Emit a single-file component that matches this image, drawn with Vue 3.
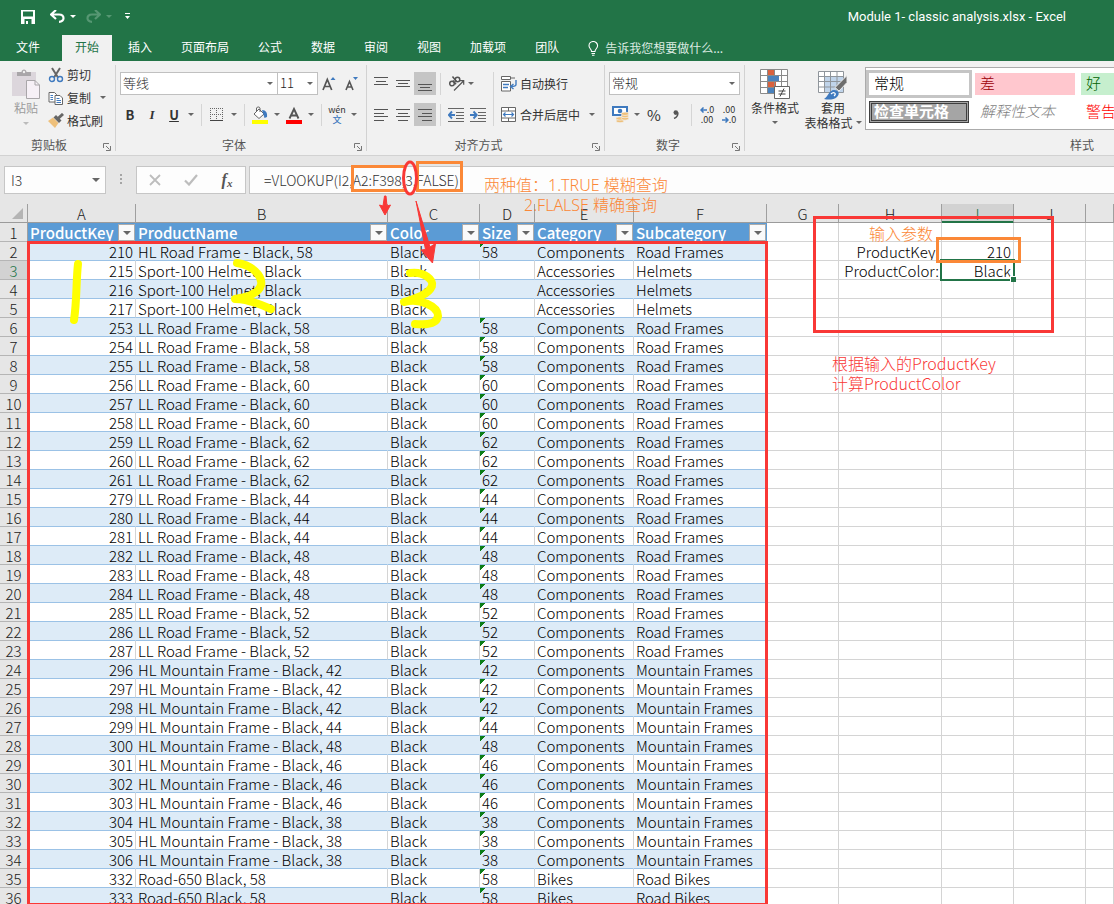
<script setup>
import { ref } from 'vue'

const tabs = ['插入', '页面布局', '公式', '数据', '审阅', '视图', '加载项', '团队']
const formula = ref('=VLOOKUP(I2,A2:F398,3,FALSE)')
const cellName = ref('I3')

const columns = [
  { id: 'A', title: 'ProductKey' },
  { id: 'B', title: 'ProductName' },
  { id: 'C', title: 'Color' },
  { id: 'D', title: 'Size' },
  { id: 'E', title: 'Category' },
  { id: 'F', title: 'Subcategory' },
]
const freeColumns = ['G', 'H', 'I', 'J', '']

const components = (key, name, size, sub) => [key, name + ' - Black, ' + size, 'Black', size, 'Components', sub]
const helmet = (key) => [key, 'Sport-100 Helmet, Black', 'Black', '', 'Accessories', 'Helmets']
const bike = (key) => [key, 'Road-650 Black, 58', 'Black', '58', 'Bikes', 'Road Bikes']
const group = (keys, name, size, sub) => keys.map((k) => components(k, name, size, sub))

const data = [
  components(210, 'HL Road Frame', '58', 'Road Frames'),
  helmet(215),
  helmet(216),
  helmet(217),
  ...group([253, 254, 255], 'LL Road Frame', '58', 'Road Frames'),
  ...group([256, 257, 258], 'LL Road Frame', '60', 'Road Frames'),
  ...group([259, 260, 261], 'LL Road Frame', '62', 'Road Frames'),
  ...group([279, 280, 281], 'LL Road Frame', '44', 'Road Frames'),
  ...group([282, 283, 284], 'LL Road Frame', '48', 'Road Frames'),
  ...group([285, 286, 287], 'LL Road Frame', '52', 'Road Frames'),
  ...group([296, 297, 298], 'HL Mountain Frame', '42', 'Mountain Frames'),
  ...group([299], 'HL Mountain Frame', '44', 'Mountain Frames'),
  ...group([300], 'HL Mountain Frame', '48', 'Mountain Frames'),
  ...group([301, 302, 303], 'HL Mountain Frame', '46', 'Mountain Frames'),
  ...group([304, 305, 306], 'HL Mountain Frame', '38', 'Mountain Frames'),
  bike(332),
  bike(333),
]
const rows = data.map((cells, i) => ({ n: i + 2, cells }))

const side = { '2H': 'ProductKey:', '2I': '210', '3H': 'ProductColor:', '3I': 'Black' }
const sideText = (n, c) => side[n + c] || ''
</script>

<template>
  <div class="app">
    <header class="titlebar">
      <div class="quick">
        <button aria-label="保存" class="q-save">
          <svg width="14" height="14" viewBox="0 0 14 14"><path d="M0 0h14v14H0z M2 1.5v5h10v-5z M3.5 9v5h7V9z" fill="#fff" fill-rule="evenodd" /><path d="M5 11h2v3H5z" fill="#fff" /></svg>
        </button>
        <button aria-label="撤消" class="q-undo">
          <svg width="15" height="13" viewBox="0 0 15 13"><path d="M6 0L1 4.5 6 9M1.5 4.5H9c6 0 6 7.3 0 7.3" fill="none" stroke="#fff" stroke-width="2.2" /></svg>
        </button>
        <i class="caret light"></i>
        <button aria-label="恢复" class="q-redo">
          <svg width="15" height="13" viewBox="0 0 15 13"><path d="M9 0l5 4.500-5 4.500M13.500 4.500H6c-6 0-6 7.300 0 7.300" fill="none" stroke="#569773" stroke-width="2.200" /></svg>
        </button>
        <i class="caret faded"></i>
        <button aria-label="自定义快速访问工具栏" class="q-more">
          <svg width="6" height="7" viewBox="0 0 6 7"><path d="M0 0h5v1H0zM0 3h5L2.500 6z" fill="#fff" /></svg>
        </button>
      </div>
      <h1>Module 1- classic analysis.xlsx - Excel</h1>
    </header>

    <nav class="tabs">
      <button class="file">文件</button>
      <button class="active">开始</button>
      <button v-for="t in tabs" :key="t">{{ t }}</button>
      <button class="tell">
        <svg width="11" height="15" viewBox="0 0 11 15"><path d="M3.500 10.500C3.500 8 1 7.500 1 4.800a4.300 4.300 0 0 1 8.600 0C9.600 7.500 7 8 7 10.500zM3.500 12.500H7M4 14.300h2.500" fill="none" stroke="#fff" stroke-width="1.100" /></svg>
        <span>告诉我您想要做什么...</span>
      </button>
    </nav>

    <section class="ribbon">
      <div class="group clipboard">
        <div class="body">
          <button class="paste">
            <svg width="28" height="30" viewBox="0 0 28 30"><path d="M0 3h24v24H0z" fill="#dcd6dc" /><path d="M5 7V3h4.500C9.500-.500 14.500-.500 14.500 3H19v4z" fill="#a9a6a9" /><circle cx="12" cy="3" r="1.200" fill="#f1f1f1" /><path d="M14.500 11.500h8.500l4.500 4.500v13.500h-13z" fill="#f6f0f6" stroke="#a9a6a9" /><path d="M23 11.500v4.500h4.500" fill="none" stroke="#a9a6a9" /></svg>
            <span>粘贴</span>
            <i class="caret pale"></i>
          </button>
          <div class="clip-list">
            <button>
              <svg width="16" height="16" viewBox="0 0 16 16"><path d="M4 1l6 9.500M12 1L6 10.500" stroke="#666" stroke-width="2" fill="none" /><circle cx="4" cy="12" r="2.500" fill="none" stroke="#3f7abf" stroke-width="1.400" /><circle cx="12" cy="12" r="2.500" fill="none" stroke="#3f7abf" stroke-width="1.400" /></svg>
              剪切
            </button>
            <button>
              <svg width="16" height="16" viewBox="0 0 16 16"><path d="M1 2.500h5.500l2 2V12H1z" fill="#fff" stroke="#666" /><path d="M7 5.500h5L14.500 8v6.500H7z" fill="#fff" stroke="#666" /><path d="M2.500 5.500H5M2.500 7.500H5M2.500 9.500H5M8.500 8.500h3M8.500 10.500h4.500M8.500 12.500h4.500" stroke="#3f7abf" /></svg>
              复制
              <i class="caret"></i>
            </button>
            <button>
              <svg width="16" height="16" viewBox="0 0 16 16"><path d="M0 8l5-3.500 5.500 5.500L7 15z" fill="#eec07b" /><path d="M5.500 4.500L8 2l5.500 5.500L11 10z" fill="#666" /><path d="M10 5.500L15 1" stroke="#666" stroke-width="3" /></svg>
              格式刷
            </button>
          </div>
        </div>
        <footer>剪贴板<button class="launch" aria-label="剪贴板选项"><svg width="8" height="8" viewBox="0 0 8 8"><path d="M.500 5V.500H6M3 3l3.500 3.500M7.500 3v4.500H3" fill="none" stroke="#777" /></svg></button></footer>
      </div>

      <div class="group font">
        <div class="body stack">
          <div class="row">
            <label class="combo w-font"><select aria-label="字体"><option>等线</option></select><i class="caret"></i></label>
            <label class="combo w-size"><select aria-label="字号"><option>11</option></select><i class="caret"></i></label>
            <button class="btn" aria-label="增大字号"><svg width="16" height="16" viewBox="0 0 16 16"><path d="M2 14L6.300 3.500 10.700 14M3.500 10.500h5.500" fill="none" stroke="#555" stroke-width="1.700" /><path d="M9.500 4L12 1l2.500 3z" fill="#3f7abf" /></svg></button>
            <button class="btn" aria-label="减小字号"><svg width="16" height="16" viewBox="0 0 16 16"><path d="M3 14l3.500-8.500L10 14M4.200 11h4.600" fill="none" stroke="#555" stroke-width="1.600" /><path d="M10 1h5l-2.500 3z" fill="#3f7abf" /></svg></button>
          </div>
          <div class="row">
            <button class="btn bold">B</button>
            <button class="btn italic">I</button>
            <button class="btn under">U</button>
            <button class="drop" aria-label="下划线选项"><i class="caret"></i></button>
            <i class="sep"></i>
            <button class="btn" aria-label="边框"><svg width="14" height="14" viewBox="0 0 14 14"><path d="M.500 0v12M12.500 0v12M6.500 0v12M0 .500h13M0 6.500h13" stroke="#666" stroke-dasharray="1 1" /><path d="M0 12.500h13" stroke="#444" /></svg></button>
            <button class="drop" aria-label="边框选项"><i class="caret"></i></button>
            <i class="sep"></i>
            <button class="btn" aria-label="填充颜色"><svg width="18" height="18" viewBox="0 0 18 18"><path d="M8 3l5 5-5 4.500L3 8z" fill="#fff" stroke="#666" /><path d="M5.500 6V2a2 2 0 0 1 3.500 0v4" fill="none" stroke="#666" /><path d="M11 4c4 0 5.500 3 5 7l-2.500 1z" fill="#3f7abf" /><path d="M1 14h16v4H1z" fill="#ff0" /></svg></button>
            <button class="drop" aria-label="填充颜色选项"><i class="caret"></i></button>
            <button class="btn" aria-label="字体颜色"><svg width="18" height="18" viewBox="0 0 18 18"><path d="M4.500 12.500L9 3l4.500 9.500M6 9.500h6" fill="none" stroke="#555" stroke-width="1.900" /><path d="M1 14h16v4H1z" fill="red" /></svg></button>
            <button class="drop" aria-label="字体颜色选项"><i class="caret"></i></button>
            <i class="sep"></i>
            <button class="btn wen"><span>wén</span><b>文</b></button>
            <button class="drop" aria-label="拼音选项"><i class="caret"></i></button>
          </div>
        </div>
        <footer>字体<button class="launch" aria-label="字体选项"><svg width="8" height="8" viewBox="0 0 8 8"><path d="M.500 5V.500H6M3 3l3.500 3.500M7.500 3v4.500H3" fill="none" stroke="#777" /></svg></button></footer>
      </div>

      <div class="group align">
        <div class="body split">
          <div class="stack">
            <div class="row">
              <button class="btn" aria-label="顶端对齐"><svg width="14" height="14" viewBox="0 0 14 14"><path d="M0 .500h14M2 4.500h10M0 7.500h14" stroke="#555" /></svg></button>
              <button class="btn" aria-label="垂直居中"><svg width="14" height="14" viewBox="0 0 14 14"><path d="M0 3.500h14M2 6.500h10M0 9.500h14" stroke="#555" /></svg></button>
              <button class="btn on" aria-label="底端对齐"><svg width="14" height="14" viewBox="0 0 14 14"><path d="M0 7.500h14M2 10.500h10M0 13.500h14" stroke="#555" /></svg></button>
              <i class="sep"></i>
              <button class="btn" aria-label="方向"><svg width="17" height="17" viewBox="0 0 17 17"><g fill="none" stroke="#555" stroke-width="1.500"><circle cx="4" cy="8.500" r="2.300" /><path d="M5 5.500l3 3.800" /><circle cx="9.500" cy="4.500" r="2.300" /><path d="M4.500 1.500l4 5" /><path d="M6 15.500L15.500 6M11.500 5.700h4.200v4" stroke-width="1.200" /></g></svg></button>
              <button class="drop slim" aria-label="方向选项"><i class="caret"></i></button>
            </div>
            <div class="row">
              <button class="btn" aria-label="左对齐"><svg width="14" height="14" viewBox="0 0 14 14"><path d="M0 1.500h14M0 5.500h10M0 8.500h14M0 12.500h10" stroke="#555" /></svg></button>
              <button class="btn" aria-label="居中"><svg width="14" height="14" viewBox="0 0 14 14"><path d="M0 1.500h14M2 5.500h10M0 8.500h14M2 12.500h10" stroke="#555" /></svg></button>
              <button class="btn on" aria-label="右对齐"><svg width="14" height="14" viewBox="0 0 14 14"><path d="M0 1.500h14M4 5.500h10M0 8.500h14M4 12.500h10" stroke="#555" /></svg></button>
              <i class="sep"></i>
              <button class="btn" aria-label="减少缩进量"><svg width="16" height="14" viewBox="0 0 16 14"><path d="M0 .500h16M8 4.500h8M8 7.500h8M8 10.500h8M0 13.500h16" stroke="#666" /><path d="M7 7H1M4 3.500L.800 7 4 10.500" fill="none" stroke="#3f7abf" stroke-width="1.900" /></svg></button>
              <button class="btn" aria-label="增加缩进量"><svg width="16" height="14" viewBox="0 0 16 14"><path d="M0 .500h16M8 4.500h8M8 7.500h8M8 10.500h8M0 13.500h16" stroke="#666" /><path d="M0 7h6M3.500 3.500L6.700 7l-3.200 3.500" fill="none" stroke="#3f7abf" stroke-width="1.900" /></svg></button>
            </div>
          </div>
          <i class="sep tall"></i>
          <div class="stack">
            <div class="row">
              <button class="text-btn"><svg width="16" height="16" viewBox="0 0 16 16"><path d="M.500.500h9v3h-9zM.500 5.500h9v9.500h-9z" fill="#fff" stroke="#666" /><path d="M9.500 2H14" stroke="#666" /><path d="M2 8.500h6M2 11.500h5M15 4v4.500c0 2-2 2-5 2M12.500 8l-3 2.500 3 2.500" fill="none" stroke="#3f7abf" stroke-width="1.400" /></svg>自动换行</button>
            </div>
            <div class="row">
              <button class="text-btn"><svg width="16" height="16" viewBox="0 0 16 16"><path d="M.500.500h14v14H.500zM.500 4h14M.500 11h14M7.500.500V4M7.500 11v3.500" fill="#fff" stroke="#666" /><path d="M2.500 7.500h10M4.500 5.500l-2 2 2 2M10.500 5.500l2 2-2 2" fill="none" stroke="#3f7abf" stroke-width="1.200" /></svg>合并后居中</button>
              <button class="drop" aria-label="合并选项"><i class="caret"></i></button>
            </div>
          </div>
        </div>
        <footer>对齐方式<button class="launch" aria-label="对齐选项"><svg width="8" height="8" viewBox="0 0 8 8"><path d="M.500 5V.500H6M3 3l3.500 3.500M7.500 3v4.500H3" fill="none" stroke="#777" /></svg></button></footer>
      </div>

      <div class="group number">
        <div class="body stack">
          <div class="row">
            <label class="combo w-number"><select aria-label="数字格式"><option>常规</option></select><i class="caret"></i></label>
          </div>
          <div class="row">
            <button class="btn" aria-label="会计数字格式"><svg width="17" height="17" viewBox="0 0 17 17"><path d="M1 1h14v8H1z" fill="#fff" stroke="#3f7abf" stroke-width="2" /><circle cx="8" cy="5" r="2.300" fill="#3f7abf" /><g fill="#eec07b" stroke="#f1f1f1" stroke-width=".700"><ellipse cx="8" cy="15" rx="4" ry="1.700" /><ellipse cx="8" cy="12.500" rx="4" ry="1.700" /><ellipse cx="13" cy="12.500" rx="3.700" ry="1.700" /><ellipse cx="13" cy="10" rx="3.700" ry="1.700" /><ellipse cx="13" cy="7.800" rx="3.700" ry="1.700" /></g></svg></button>
            <button class="drop" aria-label="货币选项"><i class="caret"></i></button>
            <button class="btn sign">%</button>
            <button class="btn sign comma" aria-label="千位分隔"><svg width="6" height="9" viewBox="0 0 6 9"><circle cx="2.800" cy="2.600" r="2.300" fill="#555" /><path d="M5 2.500C5 5.500 3.500 7.500 1 8.500" fill="none" stroke="#555" stroke-width="1.400" /></svg></button>
            <i class="sep"></i>
            <button class="btn dec"><span><svg width="7" height="6" viewBox="0 0 7 6"><path d="M7 3H1M3.500.500L1 3l2.500 2.500" fill="none" stroke="#3f7abf" stroke-width="1.500" /></svg>.0</span><span class="low">.00</span></button>
            <button class="btn dec"><span>.00</span><span><svg width="7" height="6" viewBox="0 0 7 6"><path d="M0 3h6M3.500.500L6 3 3.500 5.500" fill="none" stroke="#3f7abf" stroke-width="1.500" /></svg>.0</span></button>
          </div>
        </div>
        <footer>数字<button class="launch" aria-label="数字选项"><svg width="8" height="8" viewBox="0 0 8 8"><path d="M.500 5V.500H6M3 3l3.500 3.500M7.500 3v4.500H3" fill="none" stroke="#777" /></svg></button></footer>
      </div>

      <div class="group styles">
        <div class="body">
          <button class="big">
            <svg width="30" height="31" viewBox="0 0 30 31"><path d="M.500.500h27v24H.500z" fill="#fff" /><path d="M8 1h7v5H8zM8 13h8v6H8z" fill="#d9623f" /><path d="M8 19h6v6H8z" fill="#4a82bd" /><path d="M.500.500h27v24H.500zM.500 6.500h27M.500 12.500h27M.500 18.500h27M7.500.500v24M14.500.500v24M21.500.500v24" fill="none" stroke="#8a8a8a" /><path d="M8 7h11v5H8z" fill="#4a82bd" /><path d="M14.500 17.500h15v12h-15z" fill="#fff" stroke="#666" /><path d="M18.500 22h7M18.500 25h7M24 19.500l-4 8" stroke="#444" /></svg>
            <span>条件格式</span>
            <span class="line"><i class="caret"></i></span>
          </button>
          <button class="big second">
            <svg width="30" height="31" viewBox="0 0 30 31"><path d="M.500 2.500h25v21H.500z" fill="#fff" /><path d="M7 8h18v15H7z" fill="#c0d4ea" /><path d="M.500 2.500h25v21H.500zM.500 7.500h25M.500 12.500h25M.500 18h25M6.500 2.500v21M12.500 2.500v21M19 2.500v21" fill="none" stroke="#8f959b" /><path d="M29 6.500v7L21 22l-4-3.500z" fill="#6d6d6d" stroke="#f1f1f1" /><path d="M6 30c4-2 5-9 10-9s6 4 3 7-9 3-13 2z" fill="#3f7abf" /><path d="M13 25c3-3 6 0 3 2" fill="none" stroke="#fff" stroke-width="1.300" /></svg>
            <span>套用</span>
            <span class="line">表格格式<i class="caret"></i></span>
          </button>
          <div class="gallery">
            <button class="s-normal">常规</button>
            <button class="s-bad">差</button>
            <button class="s-good">好</button>
            <button class="s-check">检查单元格</button>
            <button class="s-note">解释性文本</button>
            <button class="s-warn">警告</button>
          </div>
        </div>
        <footer>样式</footer>
      </div>
    </section>

    <section class="formula-bar">
      <label class="name-box"><input v-model="cellName" aria-label="名称框" /><i class="caret"></i></label>
      <svg class="dots" width="3" height="12" viewBox="0 0 3 12"><path d="M0 0h2v2H0zM0 4h2v2H0zM0 8h2v2H0z" fill="#a5a5a5" /></svg>
      <div class="fx">
        <button aria-label="取消"><svg width="12" height="12" viewBox="0 0 12 12"><path d="M1 1l10 10M11 1L1 11" stroke="#bdbdbd" stroke-width="1.800" /></svg></button>
        <button aria-label="输入"><svg width="14" height="12" viewBox="0 0 14 12"><path d="M1 6.500L5 10.500 13 1" fill="none" stroke="#bdbdbd" stroke-width="2.200" /></svg></button>
        <button class="fn" aria-label="插入函数"><i>f</i><sub>x</sub></button>
      </div>
      <input v-model="formula" class="formula" aria-label="编辑栏" />
    </section>

    <main class="sheet">
      <table>
        <colgroup>
          <col class="c-n" /><col class="c-a" /><col class="c-b" /><col class="c-c" /><col class="c-d" /><col class="c-e" /><col class="c-f" /><col class="c-g" /><col class="c-h" /><col class="c-i" /><col class="c-i" /><col />
        </colgroup>
        <thead>
          <tr>
            <th class="corner"><svg width="12" height="11" viewBox="0 0 12 11"><path d="M11 0v11H0z" fill="#b4b4b4" /></svg></th>
            <th v-for="c in columns" :key="c.id">{{ c.id }}</th>
            <th v-for="c in freeColumns" :key="c" :class="{ current: c === 'I' }">{{ c }}</th>
          </tr>
        </thead>
        <tbody>
          <tr>
            <th>1</th>
            <td v-for="c in columns" :key="c.id" class="head">
              <div>{{ c.title }}<button :aria-label="c.title + ' 筛选'"><i class="caret"></i></button></div>
            </td>
            <td v-for="c in freeColumns" :key="c" class="free"></td>
          </tr>
          <tr v-for="r in rows" :key="r.n" :class="{ band: r.n % 2 === 0 }">
            <th :class="{ current: r.n === 3 }">{{ r.n }}</th>
            <td v-for="(t, i) in r.cells" :key="i" class="rec" :class="{ num: i === 0, flag: i === 3 && t }">{{ t }}</td>
            <td v-for="c in freeColumns" :key="c" class="free" :class="{ selected: r.n === 3 && c === 'I' }">{{ sideText(r.n, c) }}</td>
          </tr>
        </tbody>
      </table>
      <div class="range"></div>
    </main>

    <div class="notes">
      <div class="box orange b-range"></div>
      <div class="box orange b-false"></div>
      <div class="box red b-params"></div>
      <div class="box orange b-key"></div>
      <svg width="500" height="340" viewBox="0 0 500 340">
        <ellipse cx="410" cy="178" rx="6.500" ry="16" fill="none" stroke="#f93836" stroke-width="3" />
        <path d="M384.500 196h1.500l1 10 3.500-1-5.500 10-5.500-10 3.500 1zM416 201l14 46 5.500-3.500L432.500 263 421 250l4.500-.500z" fill="#f93836" stroke="#f93836" stroke-linejoin="round" />
        <g fill="none" stroke="#ff0" stroke-width="8" stroke-linecap="round" stroke-linejoin="round">
          <path d="M78 264C76 282 77 300 74 320" />
          <path d="M237 263C252 265 263 276 261 285C259 293 249 297 235 299C247 299 260 304 271 309" />
          <path d="M410 273C424 271 434 280 432 286C429 294 417 298 404 302C420 298 438 306 438 316C437 324 426 325 415 324" />
        </g>
      </svg>
      <p class="orange-text n1">两种值：1.TRUE 模糊查询</p>
      <p class="orange-text n2">2.FLALSE 精确查询</p>
      <p class="orange-text n3">输入参数</p>
      <p class="red-text n4">根据输入的ProductKey<br />计算ProductColor</p>
    </div>
  </div>
</template>

<style>
body { margin: 0; }
</style>

<style scoped>
.app { position: relative; height: 100vh; display: flex; flex-direction: column; overflow: hidden; background: #e6e6e6; color: #333; font: 12px/16px "Noto Sans CJK SC", sans-serif; }
.app * { box-sizing: border-box; }
button { border: 0; padding: 0; margin: 0; background: none; color: inherit; font: inherit; display: flex; align-items: center; justify-content: center; white-space: nowrap; }
input, select { font: inherit; color: inherit; border: 0; background: none; outline: 0; min-width: 0; }
svg { display: block; flex: none; }
.caret { display: block; flex: none; width: 0; height: 0; border: 3px solid transparent; border-top-color: #666; border-bottom: 0; }
.caret.light { border-top-color: #fff; }
.caret.faded { border-top-color: #569773; }
.caret.pale { border-top-color: #bbb; }

.titlebar { flex: none; height: 35px; padding: 0 48px 2px 21px; background: #227447; color: #fff; display: flex; align-items: center; justify-content: space-between; }
.titlebar h1 { margin: 0; font: 13px/16px Roboto, sans-serif; }
.quick { display: flex; align-items: center; height: 30px; }
.q-undo { margin: 0 5px 0 15px; }
.q-redo { margin: 0 5px 0 10px; }
.q-more { margin: 0 0 0 13px; }

.tabs { flex: none; height: 26px; background: #227447; color: #fff; display: flex; }
.tabs button { padding: 0 13px 2px; margin-right: 3px; }
.tabs .file { width: 62px; padding: 0 6px 2px 0; margin: 0; }
.tabs .active { background: #f1f1f1; color: #227447; }
.tabs .tell { gap: 6px; padding-bottom: 0; color: #dcebe2; }

.ribbon { flex: none; height: 95px; background: #f1f1f1; border-bottom: 1px solid #d2d2d2; display: flex; overflow: hidden; }
.group { flex: none; display: flex; flex-direction: column; position: relative; }
.group::after { content: ""; position: absolute; right: 0; top: 4px; bottom: 4px; width: 1px; background: #d2d2d2; }
.group footer { height: 16px; display: flex; align-items: center; justify-content: center; color: #555; position: relative; padding-right: 18px; }
.launch { position: absolute; right: 5px; bottom: 2px; }
.body { height: 76px; display: flex; }
.stack { display: flex; flex-direction: column; gap: 8px; }
.body.stack, .split { padding-top: 11px; }
.row { display: flex; align-items: center; height: 23px; }
.btn { width: 22px; height: 23px; flex: none; }
.btn.on { background: #c5c5c5; }
.drop { width: 12px; height: 23px; flex: none; }
.drop.slim { width: 8px; }
.sep { flex: none; width: 1px; height: 22px; margin: 0 4px; background: #d5d5d5; }
.sep.tall { height: 54px; }

.clipboard { width: 116px; }
.paste { width: 28px; margin: 8px 0 0 12px; flex-direction: column; justify-content: flex-start; color: #9c9c9c; }
.paste .caret { margin-top: 6px; }
.paste span { margin-top: 1px; }
.clip-list { padding: 2px 0 0 8px; }
.clip-list button { height: 23px; gap: 3px; }
.clip-list .caret { margin-left: 6px; }

.font { width: 251px; padding-left: 3px; }
.font .row:first-child { padding-left: 1px; }
.combo { position: relative; display: flex; height: 23px; background: #fff; border: 1px solid #c0c0c0; }
.combo select { appearance: none; width: 100%; padding: 0 2px 2px; font-size: 13px; font-weight: 300; color: #222; }
.combo .caret { position: absolute; right: 4px; top: 9px; }
.w-font { width: 158px; }
.w-size { width: 41px; margin-left: -1px; }
.w-number { width: 131px; }
.bold { font-weight: 700; font-size: 13px; }
.italic { font: italic 700 13px "Liberation Serif", serif; }
.under { font-weight: 700; font-size: 13px; text-decoration: underline; }
.wen { flex-direction: column; font-size: 9px; line-height: 10px; }
.wen b { color: #3f7abf; font-weight: 500; }

.align { width: 238px; padding-left: 3px; }
.text-btn { height: 23px; gap: 3px; padding-left: 3px; }
.text-btn + .drop { margin-left: 6px; }
.number { width: 140px; padding-left: 4px; }
.sign { font-size: 15px; }
.dec { flex-direction: column; font-size: 9px; line-height: 10px; align-items: center; }
.dec span { display: flex; align-items: center; }

.styles { flex: 1; min-width: 0; overflow: hidden; }
.styles footer { padding: 0 20px 0 0; justify-content: flex-end; }
.styles::after { display: none; }
.big { flex: none; width: 60px; padding-top: 8px; flex-direction: column; justify-content: flex-start; }
.big span { line-height: 15px; }
.big .line { display: flex; align-items: center; justify-content: center; height: 15px; }
.big.second { width: 56px; }
.big.second .line { gap: 3px; }
.gallery { flex: 1; min-width: 0; overflow: hidden; height: 63px; margin: 6px 0 0 4px; padding: 5px 0 5px 3px; background: #fff; border: 1px solid #ababab; border-right: 0; display: grid; grid-template-columns: 100px 100px minmax(0, 1fr); grid-auto-rows: 22px; gap: 6px; }
.gallery button { justify-content: flex-start; padding: 0 0 2px 5px; font-size: 15px; font-weight: 300; }
.gallery .s-normal { outline: 3px solid #c5c5c5; color: #000; background: #fff; }
.s-bad { background: #ffc7ce; color: #9c0006; }
.s-good { background: #c6efce; color: #006100; }
.gallery .s-check { background: #a5a5a5; color: #fff; font-weight: 700; border: 3px double #3f3f3f; padding-left: 2px; }
.s-note { color: #7f7f7f; font-style: italic; }
.s-warn { color: red; }

.formula-bar { flex: none; height: 48px; padding: 10px 0 10px 4px; display: flex; align-items: center; color: #333; font-weight: 300; }
.name-box { width: 102px; height: 28px; position: relative; display: flex; background: #fdfdfd; border: 1px solid #c6c6c6; font-size: 14px; }
.name-box input { width: 80%; padding: 0 6px; }
.name-box .caret { position: absolute; right: 5px; top: 11px; border-width: 4px; border-bottom: 0; }
.dots { margin: 0 13px 0 14px; }
.fx { width: 110px; height: 28px; display: flex; background: #fdfdfd; border: 1px solid #c6c6c6; margin-right: 3px; }
.fx button { flex: 1; }
.fx .fn { font: italic 700 16px/20px "Liberation Serif", serif; color: #555; }
.fn sub { font-size: 11px; vertical-align: baseline; margin-top: 6px; }
.formula { flex: 1; height: 28px; padding: 0 14px; background: #fdfdfd; border: 1px solid #c6c6c6; border-right: 0; font-size: 14px; }

.sheet { flex: 1; min-height: 0; position: relative; overflow: hidden; font-size: 15px; color: #000; }
table { table-layout: fixed; width: 100%; border-collapse: separate; border-spacing: 0; font-weight: 300; }
.c-n { width: 28px; } .c-a { width: 108px; } .c-b { width: 252px; } .c-c { width: 92px; } .c-d { width: 55px; } .c-e { width: 99px; } .c-f { width: 133px; } .c-g { width: 72px; } .c-h { width: 103px; } .c-i { width: 72px; }
th, td { height: 19px; padding: 1px 2px 0; line-height: 17px; white-space: nowrap; overflow: hidden; text-align: left; }
th { font-weight: 300; text-align: center; background: #e6e6e6; color: #222; border-right: 1px solid #9f9f9f; border-bottom: 1px solid #b5b5b5; }
thead th { border-bottom-color: #9b9b9b; }
.corner svg { margin: 0 0 0 10px; }
.current { background: #d2d2d2; color: #227447; }
thead .current { box-shadow: inset 0 -1px #227447; border-bottom-color: #227447; }
tbody .current { border-right-color: #227447; }
.head { padding: 0 0 0 2px; background: #5b9bd5; color: #fff; font-weight: 500; border-bottom: 1px solid #9bc2e6; }
.head div { display: flex; justify-content: space-between; align-items: center; height: 18px; padding-top: 1px; }
.head button { width: 17px; height: 17px; margin-right: 1px; background: #fafafa; border: 1px solid #ababab; }
.head .caret { border-width: 4px; border-bottom: 0; }
.rec { background: #fff; border-bottom: 1px solid #9bc2e6; border-right: 1px solid #d4d4d4; }
.band .rec { background: #ddebf7; border-right-color: #ddebf7; }
.num { text-align: right; }
.rec.flag, .band .flag { background-image: linear-gradient(135deg, #0b7d17 4px, transparent 4px); }
.free { background: #fff; text-align: right; border-right: 1px solid #d4d4d4; border-bottom: 1px solid #d4d4d4; }
.selected { position: relative; overflow: visible; }
.selected::before { content: ""; position: absolute; inset: -2px; border: 2px solid #227447; }
.selected::after { content: ""; position: absolute; right: -3px; bottom: -3px; width: 5px; height: 5px; background: #227447; border: solid #fff; border-width: 1px 0 0 1px; box-sizing: content-box; }
.range { position: absolute; left: 27px; top: 37px; width: 741px; bottom: -2px; border: 3px solid #f93836; }

.notes { position: absolute; inset: 0; pointer-events: none; }
.notes > * { position: absolute; margin: 0; }
.notes svg { left: 0; top: 0; }
.box { border: 3px solid; }
.orange { border-color: #fb8837; }
.red { border-color: #f93836; }
.b-range { left: 351px; top: 165px; width: 54px; height: 27px; border-right: 0; }
.b-false { left: 416px; top: 161px; width: 47px; height: 31px; }
.b-params { left: 813px; top: 216px; width: 241px; height: 117px; }
.b-key { left: 936px; top: 237px; width: 85px; height: 26px; }
.notes p { font-size: 16px; line-height: 20px; font-weight: 300; white-space: nowrap; }
.orange-text { color: #fb8837; }
.red-text { color: #f93836; }
.notes .n1, .notes .n2 { font-family: "Noto Sans", "Noto Sans CJK SC", sans-serif; }
.n1 { left: 484px; top: 175px; }
.n2 { left: 524px; top: 195px; }
.n3 { left: 869px; top: 223px; }
.n4 { left: 832px; top: 353px; }
</style>
